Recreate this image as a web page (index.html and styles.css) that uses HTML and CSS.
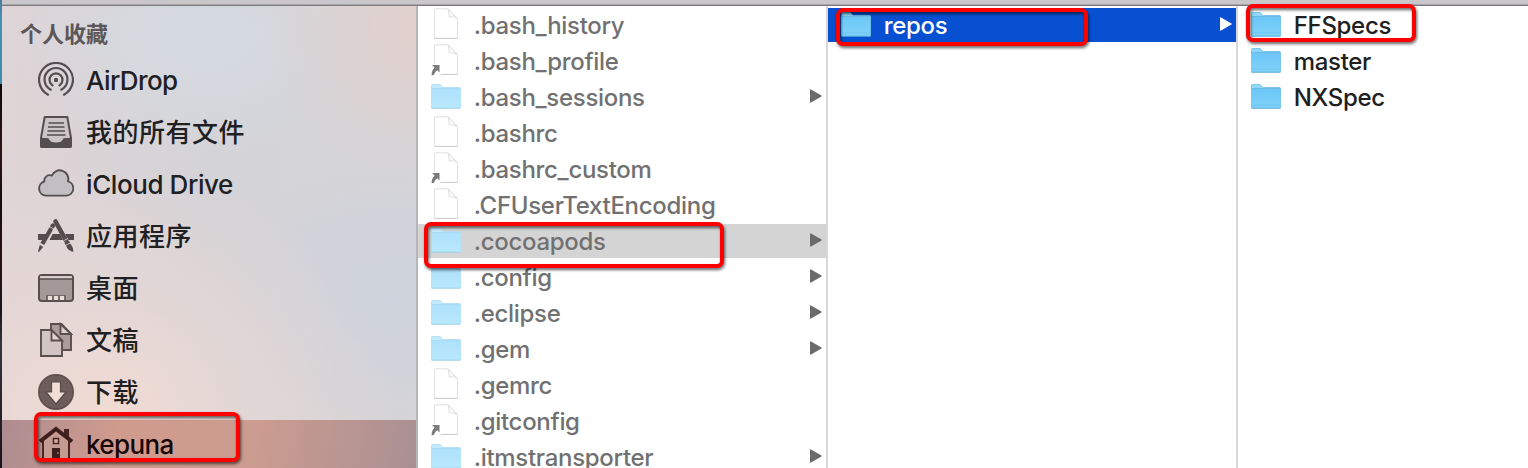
FILE: index.html
```
<!DOCTYPE html>
<html lang="zh-CN">
<head>
<meta charset="utf-8">
<title>Finder</title>
<link rel="stylesheet" href="styles.css">
</head>
<body>
<svg class="defs" aria-hidden="true">
  <defs>
    <linearGradient id="fold" x1="0" y1="0" x2="0" y2="1"><stop offset="0" stop-color="#6cc6f6"/><stop offset="1" stop-color="#80d3fa"/></linearGradient>
    <linearGradient id="foldLight" x1="0" y1="0" x2="0" y2="1"><stop offset="0" stop-color="#aee1fb"/><stop offset="1" stop-color="#b8e8fd"/></linearGradient>
    <symbol id="folder" viewBox="0 0 30 32">
      <path d="M0.5 28V5.500Q.5 4.500 1.500 4.500H8.500Q9.500 4.500 10.200 5.500L11 6.500Q11.500 7.500 12.500 7.500H28.500Q29.500 7.500 29.500 8.500V28Z" fill="#8fd8fb" stroke="#6dbbe2" stroke-width=".8"/>
      <path d="M.5 9H29.500V27Q29.500 28 28.500 28H1.500Q.5 28 .5 27Z" fill="url(#fold)"/>
      <path d="M.5 8.500H29.500" stroke="#62b5df" stroke-width=".8"/>
      <path d="M.5 25H29.500" stroke="#69c0ee" stroke-width=".7"/>
      <path d="M.5 28.200H29.500" stroke="#58a8d2" stroke-width=".9"/>
    </symbol>
    <symbol id="folder-light" viewBox="0 0 30 32">
      <path d="M0.5 28V5.500Q.5 4.500 1.500 4.500H8.500Q9.500 4.500 10.200 5.500L11 6.500Q11.500 7.500 12.500 7.500H28.500Q29.500 7.500 29.500 8.500V28Z" fill="#c2ebfd" stroke="#abdcf2" stroke-width=".8"/>
      <path d="M.5 9H29.500V27Q29.500 28 28.500 28H1.500Q.5 28 .5 27Z" fill="url(#foldLight)"/>
      <path d="M.5 8.500H29.500" stroke="#a2d8f0" stroke-width=".8"/>
      <path d="M.5 28.200H29.500" stroke="#9dcde5" stroke-width=".9"/>
    </symbol>
    <symbol id="doc" viewBox="0 0 30 32">
      <path d="M3.500 .8H17L26.500 10.500V30.300H3.500Z" fill="#fff" stroke="#e2e2e2" stroke-width="1"/>
      <path d="M17 .8Q18.500 5 18 8.800Q22.500 8 26.500 10.500Z" fill="#fafafa" stroke="#dadada" stroke-width=".9"/>
      <path d="M3.500 30.500H26.500" stroke="#cecece" stroke-width="1"/>
    </symbol>
    <symbol id="alias" viewBox="0 0 30 32">
      <use href="#doc"/>
      <path d="M0 20H9.500V31H0Z" fill="#fff"/>
      <path d="M1 21H8.500V28.500L6.300 26.200Q3.500 28 2.800 31H.6Q.5 26.500 3.700 23.500Z" fill="#7b7b7b"/>
    </symbol>
    <symbol id="arrow" viewBox="0 0 12 14"><path d="M0 1Q0 0 1 .4L11.500 6.400Q12 7 11.500 7.600L1 13.600Q0 14 0 13Z" fill="currentColor"/></symbol>
  </defs>
</svg>
<div class="screen">
  <div class="desktop-edge"></div>
  <main class="window">
    <div class="toolbar-edge"></div>
    <div class="panes">
      <nav class="sidebar">
        <h2 class="heading">个人收藏</h2>
        <div class="place">
          <svg class="place-icon" viewBox="0 0 36 36"><g fill="none" stroke="#544e50" stroke-width="2.200" stroke-linecap="round"><path d="M10 32.700A16.900 16.900 0 1 1 26 32.700"/><path d="M12.700 27.700A11.500 11.500 0 1 1 23.300 27.700"/><path d="M14.500 23.300A6.500 6.500 0 1 1 21.500 23.300"/></g><circle cx="18" cy="18" r="2.200" fill="#544e50"/></svg>
          <span>AirDrop</span>
        </div>
        <div class="place">
          <svg class="place-icon" viewBox="0 0 36 36"><path d="M6.700 3H29.300L33 24V32.500Q33 33 32.500 33H3.500Q3 33 3 32.500V24Z" fill="#cbc5c7" stroke="#544e50" stroke-width="2" stroke-linejoin="round"/><path d="M3 24H9Q11 24 11.500 26Q13 28.500 18 28.500T24.500 26Q25 24 27 24H33V33H3Z" fill="#544e50"/><path d="M10.500 9H26M10 13H26.500M9.500 17H27M9 21H27.500" stroke="#544e50" stroke-width="1.700"/></svg>
          <span class="cjk">我的所有文件</span>
        </div>
        <div class="place">
          <svg class="place-icon" viewBox="0 0 36 36"><path d="M8 29.600A7.200 7.200 0 0 1 6.300 15.500A5.500 5.500 0 0 1 13.800 9.600A8.600 8.600 0 0 1 30 15.300A7.300 7.300 0 0 1 28.500 29.600Z" fill="#c3bec1" stroke="#544e50" stroke-width="1.900" stroke-linejoin="round"/></svg>
          <span class="wide">iCloud Drive</span>
        </div>
        <div class="place">
          <svg class="place-icon" viewBox="0 0 36 36"><path d="M0 16H9.500L6 22H0ZM14.500 16H22L25 22H11.500ZM27 16H36V22H30.500Z" fill="#544c4e"/><g stroke="#544c4e" fill="none"><path d="M17.500 3.500L28 22.500" stroke-width="4.600" stroke-linecap="round"/><path d="M13.200 10.500L4.300 26" stroke-width="4.300"/><path d="M15 7.500L14 9" stroke-width="4.300" stroke-linecap="round"/><path d="M28.700 23.800L29.800 25.800" stroke-width="5"/></g><path d="M1.800 26.800L5.200 28.900L1 34L0 33.500ZM28 27.500L32 25.500Q35.500 28.500 35.300 34Q29.500 32.500 28 27.500Z" fill="#544c4e"/><path d="M11.500 8.500L16 11.200M26 22.500L30 20.500" stroke="#d9cfd0" stroke-width=".9"/></svg>
          <span class="cjk">应用程序</span>
        </div>
        <div class="place">
          <svg class="place-icon" viewBox="0 0 36 36"><rect x="1" y="5" width="34" height="26" rx="2.800" fill="#a49998" stroke="#584e4e" stroke-width="2"/><path d="M2 6.200H34V8.500H2Z" fill="#dfd5d5"/><path d="M1 9H35" stroke="#584e4e" stroke-width="1.500"/><path d="M8 30V25H28V30" fill="#756969"/><path d="M10 26H14V30H10ZM16 26H20V30H16ZM22 26H26V30H22Z" fill="#eaded9"/></svg>
          <span class="cjk">桌面</span>
        </div>
        <div class="place">
          <svg class="place-icon" viewBox="0 0 36 36"><g stroke="#5b4f4e" stroke-width="1.900"><path d="M13 2H23.500L33 12V28H13Z" fill="#aa9c9a"/><path d="M22.500 2V12H33Z" fill="#dfd0cd"/><path d="M3 8H13.500L24 18.500V34H3Z" fill="#d2c4c2"/><path d="M13.500 8V18.500H24Z" fill="#e6d6d1"/></g></svg>
          <span class="cjk">文稿</span>
        </div>
        <div class="place">
          <svg class="place-icon" viewBox="0 0 36 36"><circle cx="18" cy="18" r="17.200" fill="#6c5d5b" stroke="#5d504f" stroke-width="1.600"/><path d="M13.500 8H22.500V18H28L18 30L8 18H13.500Z" fill="#f1ddd7" stroke="#574b4a" stroke-width="1.200"/></svg>
          <span class="cjk">下载</span>
        </div>
        <div class="place selected">
          <svg class="place-icon" viewBox="0 0 36 36"><path d="M4.500 15L18 4L31.500 15V35H4.500Z" fill="#c39b91"/><path d="M5 15V35M31 15V35" stroke="#472422" stroke-width="2"/><path d="M26 3H31V12L26 8Z" fill="#472422"/><path d="M2 15.500L18 3L34 15.500" fill="none" stroke="#3e1e1c" stroke-width="4"/><path d="M15.500 12.500H20.500V17.500H15.500Z" fill="#dbb3a7" stroke="#472422" stroke-width="1.500"/><path d="M14 22H22V35H14Z" fill="#3e1e1c"/><path d="M20 26V28" stroke="#c39b91"/></svg>
          <span>kepuna</span>
          <i class="mark mark-home"></i>
        </div>
      </nav>
      <section class="column hidden-files">
        <div class="row"><svg class="file-icon"><use href="#doc"/></svg><span>.bash_history</span></div>
        <div class="row"><svg class="file-icon"><use href="#alias"/></svg><span>.bash_profile</span></div>
        <div class="row"><svg class="file-icon"><use href="#folder-light"/></svg><span>.bash_sessions</span><svg class="more"><use href="#arrow"/></svg></div>
        <div class="row"><svg class="file-icon"><use href="#doc"/></svg><span>.bashrc</span></div>
        <div class="row"><svg class="file-icon"><use href="#alias"/></svg><span>.bashrc_custom</span></div>
        <div class="row"><svg class="file-icon"><use href="#doc"/></svg><span>.CFUserTextEncoding</span></div>
        <div class="row current"><svg class="file-icon"><use href="#folder-light"/></svg><span>.cocoapods</span><svg class="more"><use href="#arrow"/></svg><i class="mark mark-pods"></i></div>
        <div class="row"><svg class="file-icon"><use href="#folder-light"/></svg><span>.config</span><svg class="more"><use href="#arrow"/></svg></div>
        <div class="row"><svg class="file-icon"><use href="#folder-light"/></svg><span>.eclipse</span><svg class="more"><use href="#arrow"/></svg></div>
        <div class="row"><svg class="file-icon"><use href="#folder-light"/></svg><span>.gem</span><svg class="more"><use href="#arrow"/></svg></div>
        <div class="row"><svg class="file-icon"><use href="#doc"/></svg><span>.gemrc</span></div>
        <div class="row"><svg class="file-icon"><use href="#alias"/></svg><span>.gitconfig</span></div>
        <div class="row"><svg class="file-icon"><use href="#folder-light"/></svg><span>.itmstransporter</span><svg class="more"><use href="#arrow"/></svg></div>
      </section>
      <section class="column">
        <div class="row active"><svg class="file-icon"><use href="#folder"/></svg><span>repos</span><svg class="more"><use href="#arrow"/></svg><i class="mark mark-repos"></i></div>
      </section>
      <section class="column last">
        <div class="row"><svg class="file-icon"><use href="#folder"/></svg><span>FFSpecs</span><i class="mark mark-specs"></i></div>
        <div class="row"><svg class="file-icon"><use href="#folder"/></svg><span>master</span></div>
        <div class="row"><svg class="file-icon"><use href="#folder"/></svg><span>NXSpec</span></div>
      </section>
    </div>
  </main>
</div>
</body>
</html>
```
FILE: styles.css
```
* { box-sizing: border-box; }
body { margin: 0; background: #fff; overflow: hidden; font-family: Inter, "Noto Sans CJK SC", sans-serif; }
.defs { display: block; width: 0; height: 0; }
.screen { display: flex; width: 1528px; height: 468px; overflow: hidden; }
.desktop-edge { width: 2px; flex: none; background: linear-gradient(#4d7c98 0, #4292b8 20px, #3f89ae 84px, #0d0709 84px, #301415 150px, #140c10 200px, #2b1013 250px, #171519 310px, #353540 345px, #17131b 468px); }
.window { flex: 1; display: flex; flex-direction: column; min-width: 0; }
.toolbar-edge { height: 6px; flex: none; background: linear-gradient(#c9c7c9 0 4px, #aaa7aa 4px 5px, #7d7a7e 5px 6px); }
.panes { flex: 1; display: flex; min-height: 0; }

.sidebar {
  width: 416px; flex: none; border-right: 2px solid #b7b5b9; padding-top: 50px; position: relative;
  background:
    radial-gradient(ellipse 170px 150px at 424px 20px, #e3d0cc 0, #e3d0cc77 50%, #e3d0cc00 100%),
    radial-gradient(ellipse 200px 130px at 200px 30px, #d5dbe1 0, #d5dbe188 50%, #d5dbe100 100%),
    radial-gradient(ellipse 290px 250px at 105px 410px, #f1dbd3 0, #ebd9d499 45%, #e2d7d600 100%),
    radial-gradient(ellipse 180px 130px at 390px 290px, #cdd2dc 0, #cdd2dc77 50%, #cdd2dc00 100%),
    linear-gradient(90deg, #dfd4d6, #d4d3d7 50%, #d5d4d8);
}
.heading { margin: -50px 0 0; height: 50px; padding: 5px 0 0 18px; font-size: 22px; line-height: 46px; font-weight: 700; color: #5c5658; }
.place { position: relative; display: flex; align-items: center; gap: 12px; height: 52px; padding: 0 0 4px 36px; font-size: 26px; line-height: 36px; font-weight: 500; color: #202022; white-space: nowrap; letter-spacing: -.6px; }
.place span { padding-top: 2px; }
.place .wide { letter-spacing: -.42px; }
.place .cjk { letter-spacing: .5px; }
.place.selected { background: linear-gradient(100deg, #ac8c91 0, #d09b8d 28%, #cc9c90 60%, #a99093 100%); color: #160606; }
.place-icon { width: 36px; height: 36px; flex: none; }

.column { width: 410px; flex: none; border-right: 2px solid #d8d8d8; background: #fff; padding-top: 2px; display: flex; flex-direction: column; gap: 2px; }
.column.last { width: 290px; border-right: 0; }
.row { position: relative; display: flex; align-items: center; height: 34px; flex: none; padding: 0 4px 0 13px; font-size: 24px; line-height: 34px; font-weight: 450; letter-spacing: -.3px; color: #202020; white-space: nowrap; }
.row span { margin: 2px 0 0 12.700px; flex: 1; }
.hidden-files .row { color: #717171; }
.file-icon { width: 30px; height: 32px; flex: none; align-self: flex-start; }
.more { width: 12px; height: 14px; flex: none; margin-top: -2px; color: #6b6b6b; }
.row.current { background: #d4d4d4; }
.row.active { background: #0850d2; color: #fff; }
.row.active .more { color: #fff; }

.mark { position: absolute; z-index: 2; border: 4px solid #fe0000; border-radius: 7px; filter: drop-shadow(1px 2px 1.500px rgba(0, 0, 0, .6)); }
.mark-home { left: 32px; top: -8px; width: 206px; height: 50px; }
.mark-pods { left: 6px; top: -2px; width: 300px; height: 46px; }
.mark-repos { left: 8px; top: 0; width: 252px; height: 38px; }
.mark-specs { left: 8px; top: -4px; width: 170px; height: 38px; }
```
